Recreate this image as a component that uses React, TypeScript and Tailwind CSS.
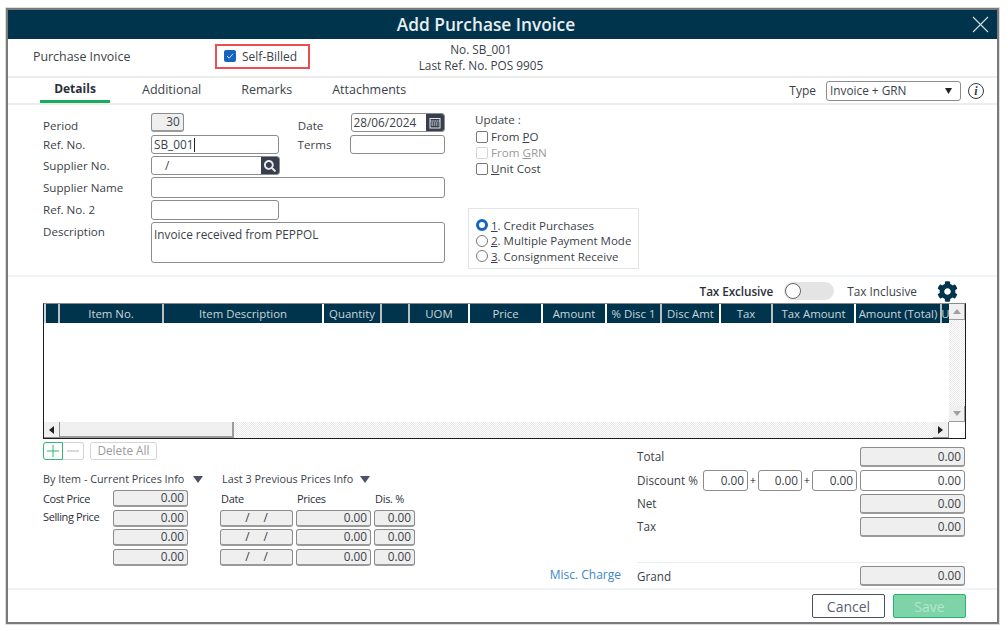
import React from "react";
import { FaCog, FaSearch } from "react-icons/fa";

const cols: { name: string; w: string; sep: string }[] = [
  { name: "", w: "w-[14px]", sep: "border-l-0" },
  { name: "Item No.", w: "w-[104px]", sep: "border-l-[#b9c0c4]" },
  { name: "Item Description", w: "w-[160px]", sep: "border-l-[#b9c0c4]" },
  { name: "Quantity", w: "w-[58px]", sep: "border-l-white" },
  { name: "", w: "w-[28px]", sep: "border-l-[#b9c0c4]" },
  { name: "UOM", w: "w-[60px]", sep: "border-l-[#b9c0c4]" },
  { name: "Price", w: "w-[73px]", sep: "border-l-white" },
  { name: "Amount", w: "w-[64px]", sep: "border-l-white" },
  { name: "% Disc 1", w: "w-[55px]", sep: "border-l-white" },
  { name: "Disc Amt", w: "w-[59px]", sep: "border-l-[#b9c0c4]" },
  { name: "Tax", w: "w-[52px]", sep: "border-l-white" },
  { name: "Tax Amount", w: "w-[83px]", sep: "border-l-[#b9c0c4]" },
  { name: "Amount (Total)", w: "w-[86px]", sep: "border-l-white" },
  { name: "U", w: "w-[9px]", sep: "border-l-[#b9c0c4]" },
];

function Box({ className = "", children }: { className?: string; children?: React.ReactNode }) {
  return (
    <div className={`flex items-center overflow-hidden rounded-[3px] border border-[#8c8c8c] text-[11.8px] text-[#3b3f4a] ${className}`}>
      {children}
    </div>
  );
}

function Ro({ className = "", children = "0.00" }: { className?: string; children?: React.ReactNode }) {
  return (
    <Box className={`justify-end border-b-2 border-b-[#9a9a9a] bg-[#efefef] pr-[3px] ${className}`}>{children}</Box>
  );
}

function Tri() {
  return (
    <svg width="10" height="7" viewBox="0 0 10 7" className="shrink-0">
      <polygon points="0,0 10,0 5,7" fill="#4c5269" />
    </svg>
  );
}

function Check({ label, ul, rest, disabled }: { label: string; ul: string; rest: string; disabled?: boolean }) {
  return (
    <div className={`flex h-[16px] items-center text-[11.6px] ${disabled ? "text-[#9a9a9a]" : "text-[#3b3f4a]"}`}>
      <span className={`ml-[1px] mr-[3px] h-[12px] w-[12px] rounded-[2px] border ${disabled ? "border-[#d5d5d5]" : "border-[#777777]"} bg-white`} />
      <span>
        {label}
        <span className="underline">{ul}</span>
        {rest}
      </span>
    </div>
  );
}

function Radio({ on, n, text }: { on?: boolean; n: string; text: string }) {
  return (
    <div className="flex h-[15.5px] items-center text-[11.5px] text-[#3b3f4a]">
      {on ? (
        <span className="mr-[3px] h-[12px] w-[12px] rounded-full border-[3.5px] border-[#1565c0] bg-white" />
      ) : (
        <span className="mr-[3px] h-[12px] w-[12px] rounded-full border border-[#777777] bg-white" />
      )}
      <span>
        <span className="underline">{n}</span>. {text}
      </span>
    </div>
  );
}

function FormLabel({ children, className = "" }: { children: React.ReactNode; className?: string }) {
  return <div className={`w-[108px] shrink-0 text-[11.6px] text-[#3b3f4a] ${className}`}>{children}</div>;
}

function PriceRow({ first }: { first?: boolean }) {
  return (
    <div className={`flex ${first ? "" : "mt-[2.5px]"}`}>
      <Box className="h-[17px] w-[73px] justify-center gap-[14px] border-b-2 border-b-[#9a9a9a] bg-[#efefef]">
        <span>/</span>
        <span>/</span>
      </Box>
      <Ro className="ml-[3px] h-[17px] w-[75px]" />
      <Ro className="ml-[3px] h-[17px] w-[41px]" />
    </div>
  );
}

const dither = "bg-[repeating-conic-gradient(#e9e9e9_0_25%,#ffffff_0_50%)] bg-[length:2px_2px]";

export default function App() {
  return (
    <div className="h-[630px] w-[1008px] overflow-hidden bg-white pl-[6px] pt-[8px] font-['Open_Sans',sans-serif]">
      <div className="flex h-[616px] w-[993px] flex-col border-2 border-[#7a7a7a] bg-white shadow-[0_0_0_1px_#dddddd]">
        {/* Title */}
        <div className="flex h-[29px] shrink-0 items-center bg-[#00344d] text-white">
          <div className="flex-1 text-center text-[17.3px] font-semibold text-[#e8eef1]">Add Purchase Invoice</div>
          <div className="flex w-[33px] items-center justify-start pl-[8px]">
            <svg width="17" height="17" viewBox="0 0 17 17">
              <path d="M1 1 L16 16 M16 1 L1 16" stroke="#d5dfe4" strokeWidth="1.1" fill="none" />
            </svg>
          </div>
        </div>

        {/* Info row */}
        <div className="flex h-[39px] shrink-0 items-center border-b-2 border-[#eceeee] pl-[25px]">
          <div className="w-[182px] text-[12.4px] text-[#3b3f4a]">Purchase Invoice</div>
          <div className="mt-[-3px] flex h-[25px] w-[95px] items-center border-2 border-[#e8504f] pl-[7px]">
            <span className="flex h-[12px] w-[12px] items-center justify-center rounded-[2px] bg-[#1565c0]">
              <svg width="8" height="8" viewBox="0 0 8 8">
                <path d="M1 4 L3.2 6.2 L7 1.8" stroke="#cfe0f5" strokeWidth="1" fill="none" />
              </svg>
            </span>
            <span className="ml-[6px] mt-[2px] text-[12px] text-[#3b3f4a]">Self-Billed</span>
          </div>
          <div className="ml-[95px] mt-[-2px] w-[152px] text-center text-[11.8px] leading-[16px] text-[#3b3f4a]">
            <div>No. SB_001</div>
            <div>Last Ref. No. POS 9905</div>
          </div>
        </div>

        {/* Tabs */}
        <div className="flex h-[27px] shrink-0 items-center border-b-2 border-[#eceeee] pl-[32px] text-[12.5px] text-[#3b3f4a]">
          <div className="flex h-[25px] w-[70px] items-center justify-center border-b-[3px] border-[#16ad5f] pb-[1px] text-[12px] font-bold text-[#2b2f3a]">
            Details
          </div>
          <div className="ml-[32px]">Additional</div>
          <div className="ml-[40px]">Remarks</div>
          <div className="ml-[40px]">Attachments</div>
          <div className="ml-auto text-[12px]">Type</div>
          <Box className="ml-[10px] h-[20px] w-[135px] justify-between pl-[3px] pr-[8px] text-[11.5px]">
            <span>Invoice + GRN</span>
            <svg width="7" height="6" viewBox="0 0 7 6">
              <polygon points="0,0 7,0 3.5,6" fill="#222222" />
            </svg>
          </Box>
          <div className="ml-[7px] mr-[13px] flex h-[16px] w-[16px] items-center justify-center rounded-full border-[1.5px] border-[#333b4a] font-['Liberation_Serif',serif] text-[12px] font-bold italic leading-none text-[#333b4a]">
            i
          </div>
        </div>

        {/* Form */}
        <div className="flex h-[172px] shrink-0 border-b-2 border-[#f0f3f3] pl-[35px] pt-[8px]">
          <div className="flex w-[402px] flex-col">
            <div className="flex h-[19px] items-start">
              <FormLabel className="mt-[4px]">Period</FormLabel>
              <Ro className="h-[19px] w-[33px] pr-[2px]">30</Ro>
              <div className="ml-[114px] mt-[4px] w-[53px] text-[11.6px] text-[#3b3f4a]">Date</div>
              <Box className="h-[19px] w-[95px] pl-[2px]">
                <span>28/06/2024</span>
                <span className="ml-auto flex h-[19px] w-[18px] items-center justify-center bg-[#373f4e]">
                  <svg width="12" height="12" viewBox="0 0 12 12">
                    <rect x="1" y="1.5" width="10" height="9.5" fill="none" stroke="#e5e7ea" strokeWidth="1" />
                    <path d="M1 4 H11 M2.5 6 H9.5 M2.5 8 H9.5" stroke="#e5e7ea" strokeWidth="1" strokeDasharray="1.5 0.7" fill="none" />
                  </svg>
                </span>
              </Box>
            </div>
            <div className="mt-[3px] flex h-[19px] items-center">
              <FormLabel>Ref. No.</FormLabel>
              <Box className="h-[19px] w-[128px] pl-[2px]">
                <span>SB_001</span>
                <span className="h-[14px] w-px bg-[#222222]" />
              </Box>
              <div className="ml-[19px] w-[53px] text-[11.6px] text-[#3b3f4a]">Terms</div>
              <Box className="h-[19px] w-[95px]" />
            </div>
            <div className="mt-[2px] flex h-[19px] items-center">
              <FormLabel className="mt-[1px]">Supplier No.</FormLabel>
              <Box className="h-[19px] w-[129px] pl-[13px]">
                <span>/</span>
                <span className="ml-auto flex h-[19px] w-[18px] items-center justify-center bg-[#373f4e]">
                  <FaSearch className="h-[12px] w-[12px] text-[#e8eaed]" />
                </span>
              </Box>
            </div>
            <div className="mt-[2px] flex h-[21px] items-center">
              <FormLabel>Supplier Name</FormLabel>
              <Box className="h-[21px] w-[295px]" />
            </div>
            <div className="mt-[2px] flex h-[20px] items-center">
              <FormLabel>Ref. No. 2</FormLabel>
              <Box className="h-[20px] w-[128px]" />
            </div>
            <div className="mt-[2px] flex h-[41px] items-start">
              <FormLabel className="mt-[1px]">Description</FormLabel>
              <Box className="h-[41px] w-[295px] items-start pl-[2px] pt-[3px]">Invoice received from PEPPOL</Box>
            </div>
          </div>

          <div className="ml-[30px] flex flex-col">
            <div className="flex h-[14px] items-center text-[11.6px] text-[#3b3f4a]">Update :</div>
            <div className="mt-[2px]">
              <Check label="From " ul="P" rest="O" />
              <Check label="From " ul="G" rest="RN" disabled />
              <Check label="" ul="U" rest="nit Cost" />
            </div>
            <div className="ml-[-7px] mt-[31px] flex h-[61px] w-[171px] flex-col justify-end border border-[#e4e4e4] pb-[4px] pl-[7px]">
              <Radio on n="1" text="Credit Purchases" />
              <Radio n="2" text="Multiple Payment Mode" />
              <Radio n="3" text="Consignment Receive" />
            </div>
          </div>
        </div>

        {/* Tax toggle */}
        <div className="flex h-[26px] shrink-0 items-center justify-end pr-[39px] pt-[2px] text-[11.8px] text-[#3b3f4a]">
          <span className="mt-[1px] font-semibold tracking-[-0.1px] text-[#2b2f3a]">Tax Exclusive</span>
          <div className="ml-[11px] flex h-[18px] w-[50px] items-center rounded-full bg-[#e4e4e4]">
            <span className="ml-[1px] h-[16px] w-[16px] rounded-full border border-[#666666] bg-white" />
          </div>
          <span className="ml-[13px] mt-[1px]">Tax Inclusive</span>
          <FaCog className="ml-[20px] h-[21px] w-[21px] text-[#00344d]" />
        </div>

        {/* Table */}
        <div className="ml-[35px] flex h-[136px] w-[923px] shrink-0 border border-[#1e1e1e] border-t-[#8a8a8a]">
          <div className="flex w-[905px] flex-col">
            <div className="flex h-[19px] shrink-0 bg-[#00344d]">
              {cols.map((c, i) => (
                <div
                  key={i}
                  className={`${c.w} flex shrink-0 items-center justify-center overflow-hidden whitespace-nowrap border-l-2 ${c.sep} text-[11.4px] text-[#c9d5db]`}
                >
                  {c.name}
                </div>
              ))}
            </div>
            <div className="flex-1 bg-white" />
            <div className={`flex h-[16px] shrink-0 ${dither}`}>
              <div className="flex w-[16px] items-center justify-center border-b border-r border-[#8f8f8f] bg-[#f0f0f0]">
                <svg width="5" height="8" viewBox="0 0 5 8">
                  <polygon points="5,0 5,8 0,4" fill="#222222" />
                </svg>
              </div>
              <div className="w-[174px] border-b-2 border-r-2 border-[#9b9b9b] bg-[#f0f0f0]" />
              <div className="ml-auto flex w-[16px] items-center justify-center border-b border-r border-[#8f8f8f] bg-[#f0f0f0]">
                <svg width="5" height="8" viewBox="0 0 5 8">
                  <polygon points="0,0 0,8 5,4" fill="#222222" />
                </svg>
              </div>
            </div>
          </div>
          <div className="flex w-[16px] flex-col">
            <div className="flex h-[16px] items-center justify-center border-b border-r border-[#9b9b9b] bg-[#f0f0f0]">
              <svg width="8" height="5" viewBox="0 0 8 5">
                <polygon points="0,5 8,5 4,0" fill="#a0a0a0" />
              </svg>
            </div>
            <div className={`flex-1 ${dither}`} />
            <div className="flex h-[16px] items-center justify-center border-b border-r border-[#9b9b9b] bg-[#f0f0f0]">
              <svg width="8" height="5" viewBox="0 0 8 5">
                <polygon points="0,0 8,0 4,5" fill="#a0a0a0" />
              </svg>
            </div>
            <div className="h-[16px] bg-white" />
          </div>
        </div>

        {/* Bottom */}
        <div className="flex h-[149px] shrink-0 pl-[35px]">
          <div className="flex w-[578px] flex-col">
            <div className="mt-[3px] flex h-[18px] items-stretch">
              <div className="flex w-[20px] items-center justify-center rounded-l-[3px] border border-[#2fb872]">
                <svg width="12" height="12" viewBox="0 0 12 12">
                  <path d="M6 0 V12 M0 6 H12" stroke="#2fb872" strokeWidth="1" />
                </svg>
              </div>
              <div className="flex w-[21px] items-center justify-center rounded-r-[3px] border border-l-0 border-[#d5d5d5]">
                <svg width="12" height="2" viewBox="0 0 12 2">
                  <path d="M0 1 H12" stroke="#b5b5b5" strokeWidth="1" />
                </svg>
              </div>
              <div className="ml-[6px] flex w-[67px] items-center justify-center rounded-[3px] border border-[#d5d5d5] text-[11.8px] text-[#9a9a9a]">
                Delete All
              </div>
            </div>
            <div className="mt-[11px] flex h-[16px] items-center text-[10.8px] text-[#3b3f4a]">
              <span className="w-[141px] whitespace-nowrap">By Item - Current Prices Info</span>
              <span className="ml-[9px]">
                <Tri />
              </span>
              <span className="ml-[19px] w-[131px] whitespace-nowrap">Last 3 Previous Prices Info</span>
              <span className="ml-[7px]">
                <Tri />
              </span>
            </div>
            <div className="mt-[3px] flex">
              <div className="flex w-[70px] flex-col pt-[1px] text-[11px] tracking-[-0.4px] text-[#2b2f3a]">
                <div className="h-[18px] leading-[16px]">Cost Price</div>
                <div className="leading-[16px]">Selling Price</div>
              </div>
              <div className="flex w-[107px] flex-col">
                <Ro className="h-[17px] w-[75px]" />
                <Ro className="mt-[2.5px] h-[17px] w-[75px]" />
                <Ro className="mt-[2.5px] h-[17px] w-[75px]" />
                <Ro className="mt-[2.5px] h-[17px] w-[75px]" />
              </div>
              <div className="flex flex-col">
                <div className="flex h-[17px] items-center pt-[2px] text-[11px] tracking-[-0.3px] text-[#2b2f3a]">
                  <span className="ml-px w-[76px]">Date</span>
                  <span className="w-[78px]">Prices</span>
                  <span>Dis. %</span>
                </div>
                <div className="mt-[2.5px]">
                  <PriceRow first />
                  <PriceRow />
                  <PriceRow />
                </div>
              </div>
            </div>
            <div className="mb-[4px] mt-auto self-end text-[12px] text-[#3a87c8]">Misc. Charge</div>
          </div>

          <div className="ml-[16px] flex w-[328px] flex-col pt-[8px] text-[11.7px] text-[#3b3f4a]">
            <div className="flex h-[20px] items-center justify-between">
              <span>Total</span>
              <Ro className="h-[20px] w-[105px]" />
            </div>
            <div className="mt-[3px] flex h-[21px] items-center">
              <span className="w-[66px]">Discount %</span>
              <Box className="h-[21px] w-[45px] justify-end pr-[3px]">0.00</Box>
              <span className="w-[10px] text-center text-[11px] text-[#222222]">+</span>
              <Box className="h-[21px] w-[44px] justify-end pr-[3px]">0.00</Box>
              <span className="w-[10px] text-center text-[11px] text-[#222222]">+</span>
              <Box className="h-[21px] w-[45px] justify-end pr-[3px]">0.00</Box>
              <Box className="ml-[3px] h-[21px] w-[105px] justify-end pr-[3px]">0.00</Box>
            </div>
            <div className="mt-[3px] flex h-[20px] items-center justify-between">
              <span>Net</span>
              <Ro className="h-[20px] w-[105px]" />
            </div>
            <div className="mt-[3px] flex h-[20px] items-center justify-between">
              <span>Tax</span>
              <Ro className="h-[20px] w-[105px]" />
            </div>
            <div className="mt-[25px] flex h-[24px] items-end justify-between border-t border-[#e8eded]">
              <span>Grand</span>
              <Ro className="h-[20px] w-[105px]" />
            </div>
          </div>
        </div>

        {/* Footer */}
        <div className="flex flex-1 items-center justify-end border-t-2 border-[#f0f3f3] pr-[31px]">
          <button className="flex h-[24px] w-[73px] items-center justify-center rounded-[2px] border border-[#4a5060] bg-white text-[14px] text-[#5a6070]">
            Cancel
          </button>
          <button className="ml-[8px] flex h-[24px] w-[73px] items-center justify-center rounded-[2px] border border-[#27b56d] bg-[#7fd3a9] text-[14px] text-[#b5e6cd]">
            Save
          </button>
        </div>
      </div>
    </div>
  );
}
